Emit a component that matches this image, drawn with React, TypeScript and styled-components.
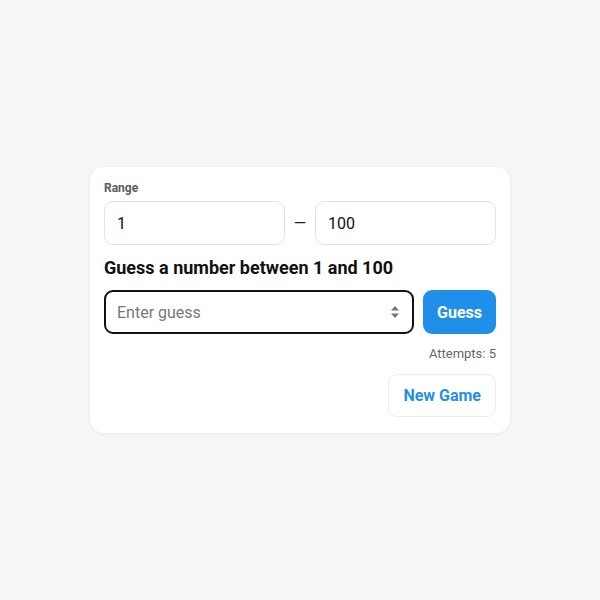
import styled, { createGlobalStyle } from "styled-components"

const Global = createGlobalStyle`
html, body {
  margin: 0;
  padding: 0;
  background: #f6f6f5;
  font-family: Roboto, "Liberation Sans", sans-serif;
}
`

const App = () => {
  return (
    <Page>
      <Global />
      <Card>
        <Label>Range</Label>
        <RangeRow>
          <Field defaultValue="1" />
          <Dash>—</Dash>
          <Field defaultValue="100" />
        </RangeRow>
        <Heading>Guess a number between 1 and 100</Heading>
        <GuessRow>
          <GuessBox>
            <GuessInput placeholder="Enter guess" />
            <Spinner width="10" height="14" viewBox="0 0 10 14">
              <path d="M5 1 L9 5.5 L1 5.5 Z" fill="#777" />
              <path d="M5 13 L9 8.5 L1 8.5 Z" fill="#777" />
            </Spinner>
          </GuessBox>
          <GuessButton>Guess</GuessButton>
        </GuessRow>
        <Attempts>Attempts: 5</Attempts>
        <Footer>
          <NewGame>New Game</NewGame>
        </Footer>
      </Card>
    </Page>
  )
}

export default App

const Page = styled.div`
width: 600px;
height: 600px;
display: flex;
align-items: center;
justify-content: center;
`
const Card = styled.div`
width: 420px;
box-sizing: border-box;
background: white;
border-radius: 14px;
padding: 13px 14px 16px 14px;
box-shadow: 0 1px 4px rgba(0,0,0,0.05);
display: flex;
flex-direction: column;
`
const Label = styled.div`
font-size: 12px;
font-weight: 700;
color: #5c5c5c;
line-height: 16px;
margin-bottom: 5px;
`
const RangeRow = styled.div`
display: flex;
align-items: center;
gap: 8px;
`
const Field = styled.input`
flex: 1;
min-width: 0;
height: 44px;
box-sizing: border-box;
border: 1px solid #e2e2e2;
border-radius: 9px;
padding: 0 12px;
font-family: inherit;
font-size: 16px;
color: #111;
outline: none;
`
const Dash = styled.span`
font-size: 16px;
color: #222;
width: 14px;
text-align: center;
`
const Heading = styled.h2`
margin: 12px 0 11px;
font-size: 18px;
font-weight: 700;
color: #111;
line-height: 22px;
`
const GuessRow = styled.div`
display: flex;
gap: 9px;
`
const GuessBox = styled.div`
position: relative;
flex: 1;
`
const GuessInput = styled.input`
width: 100%;
height: 44px;
box-sizing: border-box;
border: 2px solid #111;
border-radius: 9px;
padding: 0 11px;
font-family: inherit;
font-size: 16px;
color: #111;
outline: none;
&::placeholder {
  color: #777;
}
`
const Spinner = styled.svg`
position: absolute;
right: 14px;
top: 15px;
`
const GuessButton = styled.button`
width: 73px;
height: 44px;
border: none;
border-radius: 9px;
background: #1f8fe9;
color: white;
font-family: inherit;
font-size: 16px;
font-weight: 700;
`
const Attempts = styled.div`
text-align: right;
font-size: 13px;
color: #666;
margin-top: 12px;
line-height: 16px;
`
const Footer = styled.div`
display: flex;
justify-content: flex-end;
margin-top: 12px;
`
const NewGame = styled.button`
height: 43px;
padding: 0 14px;
background: white;
border: 1px solid #e8eef3;
border-radius: 9px;
color: #1f8fe9;
font-family: inherit;
font-size: 16px;
font-weight: 700;
`
